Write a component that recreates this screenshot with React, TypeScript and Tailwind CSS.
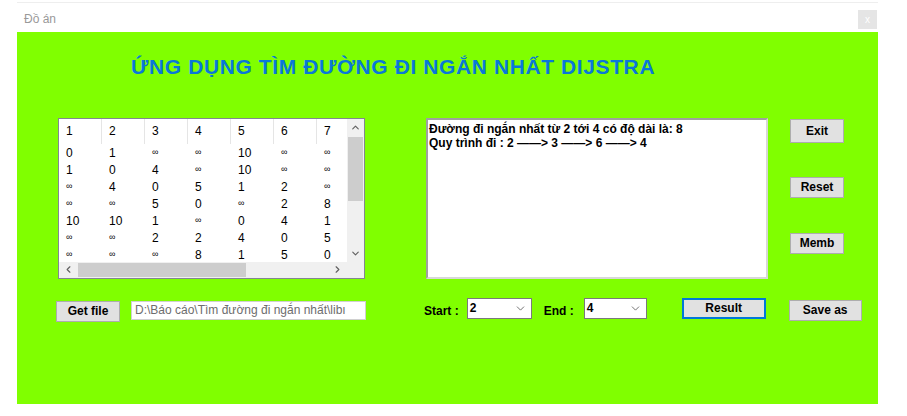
import { ChevronDown, ChevronUp, ChevronLeft, ChevronRight } from "lucide-react";

const INF = "∞";
const HEADERS = ["1", "2", "3", "4", "5", "6", "7"];
const ROWS = [
  ["0", "1", INF, INF, "10", INF, INF],
  ["1", "0", "4", INF, "10", INF, INF],
  [INF, "4", "0", "5", "1", "2", INF],
  [INF, INF, "5", "0", INF, "2", "8"],
  ["10", "10", "1", INF, "0", "4", "1"],
  [INF, INF, "2", "2", "4", "0", "5"],
  [INF, INF, INF, "8", "1", "5", "0"],
];

const font = "font-['Liberation_Sans',Arial,sans-serif]";

function WinButton({
  label,
  className = "",
  focused = false,
}: {
  label: string;
  className?: string;
  focused?: boolean;
}) {
  return (
    <button
      className={`flex items-center justify-center bg-[#e1e1e1] text-[12px] font-bold text-black ${
        focused ? "border-2 border-[#0078d7]" : "border border-[#adadad]"
      } ${className}`}
    >
      {label}
    </button>
  );
}

function Combo({ value, className = "" }: { value: string; className?: string }) {
  return (
    <div
      className={`flex items-center justify-between bg-white border border-[#7a7a7a] h-[21px] pl-[2px] pr-[4px] text-[12px] font-bold text-black ${className}`}
    >
      <span>{value}</span>
      <ChevronDown size={13} strokeWidth={1.5} className="text-[#555]" />
    </div>
  );
}

function MatrixGrid() {
  return (
    <div className="w-[307px] h-[161px] border border-[#828790] bg-white flex flex-col overflow-hidden">
      <div className="flex flex-1 min-h-0">
        <div className="flex-1 overflow-hidden">
          <div className="flex h-[25px] items-center">
            {HEADERS.map((h, i) => (
              <div
                key={h}
                className={`w-[43px] shrink-0 h-full flex items-center pl-[7px] text-[12px] text-black ${i < 6 ? "border-r border-[#e5e5e5]" : ""}`}
              >
                {h}
              </div>
            ))}
          </div>
          <div className="pt-[1px]">
            {ROWS.map((r, ri) => (
              <div key={ri} className="flex h-[17px] items-center">
                {r.map((c, ci) => (
                  <div
                    key={ci}
                    className={`w-[43px] shrink-0 pl-[7px] text-black ${c === INF ? "text-[9px]" : "text-[12px]"}`}
                  >
                    {c}
                  </div>
                ))}
              </div>
            ))}
          </div>
        </div>
        <div className="w-[17px] bg-[#f0f0f0] flex flex-col items-center">
          <ChevronUp size={11} strokeWidth={2.5} className="text-[#606060] mt-[3px]" />
          <div className="w-[15px] h-[64px] bg-[#cdcdcd] mt-[4px]" />
          <div className="flex-1" />
          <ChevronDown size={11} strokeWidth={2.5} className="text-[#606060] mb-[3px]" />
        </div>
      </div>
      <div className="flex h-[16px] bg-[#f0f0f0]">
        <div className="flex-1 flex items-center">
          <ChevronLeft size={11} strokeWidth={2.5} className="text-[#606060] ml-[4px]" />
          <div className="w-[168px] h-[14px] bg-[#cdcdcd] ml-[4px]" />
          <div className="flex-1" />
          <ChevronRight size={11} strokeWidth={2.5} className="text-[#606060] mr-[4px]" />
        </div>
        <div className="w-[17px] bg-[#f0f0f0]" />
      </div>
    </div>
  );
}

export default function App() {
  return (
    <div className={`w-[907px] h-[416px] bg-white ${font}`}>
      <div className="ml-[17px] w-[861px]">
        {/* Title bar */}
        <div className="h-[30px] border-t border-[#eeeeee] mt-[2px] flex items-start justify-between">
          <span className="text-[12px] text-[#999] ml-[7px] mt-[7px]">Đồ án</span>
          <div className="w-[19px] h-[19px] mt-[7px] mr-[1px] bg-[#e5e5e5] flex items-center justify-center text-[10px] text-white">
            x
          </div>
        </div>

        {/* Main form */}
        <div className="h-[372px] bg-[#80ff00] flex flex-col">
          <h1 className="ml-[114px] mt-[19px] text-[21px] font-bold text-[#0a78d8] tracking-[0.6px]">
            ỨNG DỤNG TÌM ĐƯỜNG ĐI NGẮN NHẤT DIJSTRA
          </h1>

          <div className="flex mt-[35px]">
            <div className="ml-[41px]">
              <MatrixGrid />
            </div>
            <div className="ml-[61px] w-[342px] h-[161px] bg-white border-2 border-[#d7d7d7] border-t-[#a0a0a0] border-l-[#a0a0a0] px-[1px] pt-[2px] text-[12px] font-bold text-black leading-[14px]">
              <div>Đường đi ngắn nhất từ 2 tới 4 có độ dài là: 8</div>
              <div>Quy trình đi : 2 ——&gt; 3 ——&gt; 6 ——&gt; 4</div>
            </div>
            <div className="ml-[22px] flex flex-col">
              <WinButton label="Exit" className="w-[54px] h-[24px] mt-[1px]" />
              <WinButton label="Reset" className="w-[54px] h-[21px] mt-[34px]" />
              <WinButton label="Memb" className="w-[54px] h-[21px] mt-[35px]" />
            </div>
          </div>

          <div className="flex items-start mt-[19px]">
            <WinButton label="Get file" className="ml-[39px] w-[64px] h-[21px] mt-[3px]" />
            <div className="ml-[11px] mt-[3px] w-[235px] h-[19px] bg-white border border-[#d0d0d0] pl-[3px] text-[12px] text-[#6d6d6d] leading-[17px] overflow-hidden whitespace-nowrap">
              D:\Báo cáo\Tìm đường đi ngắn nhất\libı
            </div>
            <span className="ml-[58px] mt-[4px] text-[12px] font-bold text-black">Start :</span>
            <Combo value="2" className="ml-[8px] w-[65px]" />
            <span className="ml-[12px] mt-[4px] text-[12px] font-bold text-black">End :</span>
            <Combo value="4" className="ml-[10px] w-[63px]" />
            <WinButton label="Result" focused className="ml-[35px] w-[84px] h-[21px]" />
            <WinButton label="Save as" className="ml-[23px] w-[73px] h-[21px] mt-[2px]" />
          </div>
        </div>
      </div>
    </div>
  );
}
